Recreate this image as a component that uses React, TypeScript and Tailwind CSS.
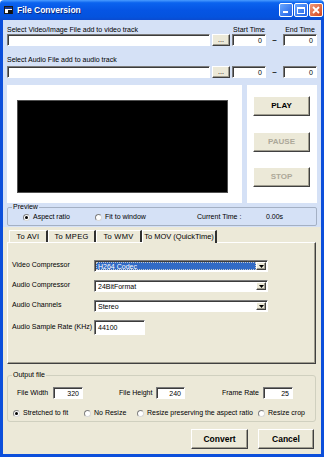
const sunken =
  "bg-white border border-t-[#7a7a7a] border-l-[#7a7a7a] border-b-white border-r-white shadow-[inset_1px_1px_0_#3c3c3c]";
const raised =
  "bg-[#ece9d8] border border-t-white border-l-white border-b-[#404040] border-r-[#404040] shadow-[inset_-1px_-1px_0_#a09d8f]";

function TextBox({ className = "", value = "", right = false }: { className?: string; value?: string; right?: boolean }) {
  return (
    <div className={`${sunken} flex items-center px-[3px] text-[7px] leading-none ${right ? "justify-end" : ""} ${className}`}>
      {value}
    </div>
  );
}

function Radio({ checked = false }: { checked?: boolean }) {
  return (
    <span className="w-[7px] h-[7px] rounded-full bg-white border border-t-[#808080] border-l-[#808080] border-b-[#d8d8d8] border-r-[#d8d8d8] flex items-center justify-center shrink-0">
      {checked && <span className="w-[3px] h-[3px] rounded-full bg-black" />}
    </span>
  );
}

function Combo({ value, selected = false }: { value: string; selected?: boolean }) {
  return (
    <div className={`${sunken} w-[174px] h-[12px] flex items-stretch p-[1px]`}>
      <div
        className={`flex-1 flex items-center px-[2px] text-[7px] leading-none ${
          selected ? "bg-[#316ac5] text-white outline-1 outline-dotted outline-[#c8c8c8] -outline-offset-1" : ""
        }`}
      >
        {value}
      </div>
      <div className={`${raised} w-[10px] flex items-center justify-center`}>
        <svg width="5" height="3" viewBox="0 0 5 3">
          <path d="M0 0h5L2.5 3z" fill="#000" />
        </svg>
      </div>
    </div>
  );
}

function Btn({ label, disabled = false, className = "" }: { label: string; disabled?: boolean; className?: string }) {
  return (
    <div
      className={`${raised} flex items-center justify-center font-bold ${disabled ? "text-[#aca899]" : "text-black"} ${className}`}
    >
      {label}
    </div>
  );
}

function TitleBar() {
  return (
    <div className="h-[20px] shrink-0 flex items-center pl-[4px] pr-[1px] rounded-t-[4px] bg-[linear-gradient(180deg,#4a9cff_0%,#0b63ef_14%,#0555e4_50%,#0453de_85%,#0a4bd0_100%)]">
      <svg width="9" height="9" viewBox="0 0 9 9">
        <rect x="0.5" y="0.5" width="8" height="7" fill="#fff" stroke="#1a1a1a" />
        <rect x="1" y="1" width="7" height="2" fill="#1a3a8a" />
        <rect x="4" y="4" width="4" height="4" fill="#111" />
      </svg>
      <span className="ml-[4px] text-white font-bold text-[8.5px] leading-none [text-shadow:1px_1px_0_#0a2a80]">
        File Conversion
      </span>
      <div className="ml-auto flex gap-[1px]">
        <div className="w-[14px] h-[14px] rounded-[2px] border border-white bg-[linear-gradient(135deg,#6aa8ff,#1d5fe6)] flex items-end pl-[3px] pb-[3px]">
          <div className="w-[5px] h-[2px] bg-white" />
        </div>
        <div className="w-[14px] h-[14px] rounded-[2px] border border-white bg-[linear-gradient(135deg,#6aa8ff,#1d5fe6)] flex items-center justify-center">
          <div className="w-[8px] h-[7px] border border-white border-t-2" />
        </div>
        <div className="w-[14px] h-[14px] rounded-[2px] border border-white bg-[linear-gradient(135deg,#f09a7a,#d2451c)] flex items-center justify-center">
          <svg width="8" height="8" viewBox="0 0 8 8">
            <path d="M1 1L7 7M7 1L1 7" stroke="#fff" strokeWidth="1.8" />
          </svg>
        </div>
      </div>
    </div>
  );
}

function Tab({ label, active = false, className = "" }: { label: string; active?: boolean; className?: string }) {
  return (
    <div
      className={`flex items-center justify-center text-[7.5px] leading-none tracking-[0.3px] bg-[#ece9d8] border-t border-l border-t-white border-l-white border-r-2 border-r-[#303030] ${
        active ? "h-[13px] relative -mb-[1px] z-10" : "h-[12px]"
      } ${className}`}
    >
      {label}
    </div>
  );
}

export default function App() {
  return (
    <div className="w-[324px] h-[457px] flex flex-col font-['Liberation_Sans',Arial,sans-serif] text-black select-none">
      <TitleBar />
      <div className="flex-1 flex flex-col border-x-[3px] border-b-[3px] border-[#0c4fdb]">
        {/* upper pane */}
        <div className="bg-[#d5e1f6] px-[4px] pt-[3px] pb-[1px] text-[7px]">
          <div className="h-[10px] flex items-end leading-none">
            <span className="flex-1">Select Video/Image File add to video track</span>
            <span className="w-[34px] text-center">Start Time</span>
            <span className="w-[17px]" />
            <span className="w-[34px] text-center">End Time</span>
          </div>
          <div className="mt-[1px] h-[12px] flex">
            <TextBox className="flex-1" />
            <Btn label="..." className="ml-[2px] w-[18px] font-normal! text-[7px]" />
            <TextBox className="ml-[2px] w-[34px]" value="0" right />
            <span className="w-[17px] flex items-center justify-center font-bold text-[8px]">–</span>
            <TextBox className="w-[34px]" value="0" right />
          </div>
          <div className="mt-[7px] h-[10px] flex items-end leading-none">Select Audio File add to audio track</div>
          <div className="mt-[3px] h-[12px] flex">
            <TextBox className="flex-1" />
            <Btn label="..." className="ml-[2px] w-[18px] font-normal! text-[7px]" />
            <TextBox className="ml-[2px] w-[34px]" value="0" right />
            <span className="w-[17px] flex items-center justify-center font-bold text-[8px]">–</span>
            <TextBox className="w-[34px]" value="0" right />
          </div>

          <div className="mt-[7px] h-[118px] flex gap-[5px]">
            <div className="w-[235px] bg-white pl-[10px] pt-[15px]">
              <div className="w-[211px] h-[93px] bg-black border border-[#505050]" />
            </div>
            <div className="flex-1 bg-white pl-[6px] flex flex-col text-[8px]">
              <Btn label="PLAY" className="mt-[11px] w-[57px] h-[20px]" />
              <Btn label="PAUSE" disabled className="mt-[16px] w-[57px] h-[20px]" />
              <Btn label="STOP" disabled className="mt-[15px] w-[57px] h-[20px]" />
            </div>
          </div>

          <fieldset className="h-[23px] border border-[#a4b0c4] rounded-[2px]">
            <legend className="ml-[4px] px-[1px] leading-[8px]">Preview</legend>
            <div className="h-[13px] flex items-center pl-[15px]">
              <div className="w-[72px] flex items-center gap-[3px]">
                <Radio checked />
                <span>Aspect ratio</span>
              </div>
              <div className="w-[102px] flex items-center gap-[3px]">
                <Radio />
                <span>Fit to window</span>
              </div>
              <span className="w-[69px]">Current Time :</span>
              <span>0.00s</span>
            </div>
          </fieldset>
        </div>

        {/* lower pane */}
        <div className="flex-1 bg-[#ece9d8] px-[4px] pt-[2px] text-[7px]">
          <div className="h-[13px] ml-[2px] flex items-end">
            <Tab label="To AVI" className="w-[39px]" />
            <Tab label="To MPEG" className="w-[48px]" />
            <Tab label="To WMV" className="w-[46px]" />
            <Tab label="To MOV (QuickTime)" active className="w-[75px] tracking-normal!" />
          </div>
          <div className="h-[122px] mr-[1px] border border-t-white border-l-white border-b-[#404040] border-r-[#404040] shadow-[inset_-1px_-1px_0_#a09d8f] pl-[4px] pt-[17px] flex flex-col gap-[8px]">
            <div className="flex items-start">
              <span className="w-[82px] leading-[9px]">Video Compressor</span>
              <Combo value="H264 Codec" selected />
            </div>
            <div className="flex items-start">
              <span className="w-[82px] leading-[9px]">Audio Compressor</span>
              <Combo value="24BitFormat" />
            </div>
            <div className="flex items-start">
              <span className="w-[82px] leading-[9px]">Audio Channels</span>
              <Combo value="Stereo" />
            </div>
            <div className="flex items-start">
              <span className="w-[82px] leading-[9px] mt-[2px]">Audio Sample Rate (KHz)</span>
              <TextBox className="w-[51px] h-[15px]" value="44100" />
            </div>
          </div>

          <fieldset className="mt-[7px] h-[51px] mr-[1px] border border-[#d0d0bf] rounded-[3px]">
            <legend className="ml-[4px] px-[1px] leading-[8px]">Output file</legend>
            <div className="mt-[8px] h-[12px] pl-[9px] flex items-center">
              <span className="w-[36px]">File Width</span>
              <TextBox className="w-[30px] h-[12px]" value="320" right />
              <span className="ml-[36px] w-[37px]">File Height</span>
              <TextBox className="w-[29px] h-[12px]" value="240" right />
              <span className="ml-[37px] w-[41px]">Frame Rate</span>
              <TextBox className="w-[30px] h-[12px]" value="25" right />
            </div>
            <div className="mt-[9px] h-[10px] pl-[5px] flex items-center">
              <div className="w-[71px] flex items-center gap-[3px]">
                <Radio checked />
                <span>Stretched to fit</span>
              </div>
              <div className="w-[53px] flex items-center gap-[3px]">
                <Radio />
                <span>No Resize</span>
              </div>
              <div className="w-[121px] flex items-center gap-[3px]">
                <Radio />
                <span>Resize preserving the aspect ratio</span>
              </div>
              <div className="flex items-center gap-[3px]">
                <Radio />
                <span>Resize crop</span>
              </div>
            </div>
          </fieldset>

          <div className="mt-[7px] mr-[3px] flex justify-end gap-[10px] text-[8.5px]">
            <Btn label="Convert" className="w-[57px] h-[20px]" />
            <Btn label="Cancel" className="w-[56px] h-[20px]" />
          </div>
        </div>
      </div>
    </div>
  );
}
